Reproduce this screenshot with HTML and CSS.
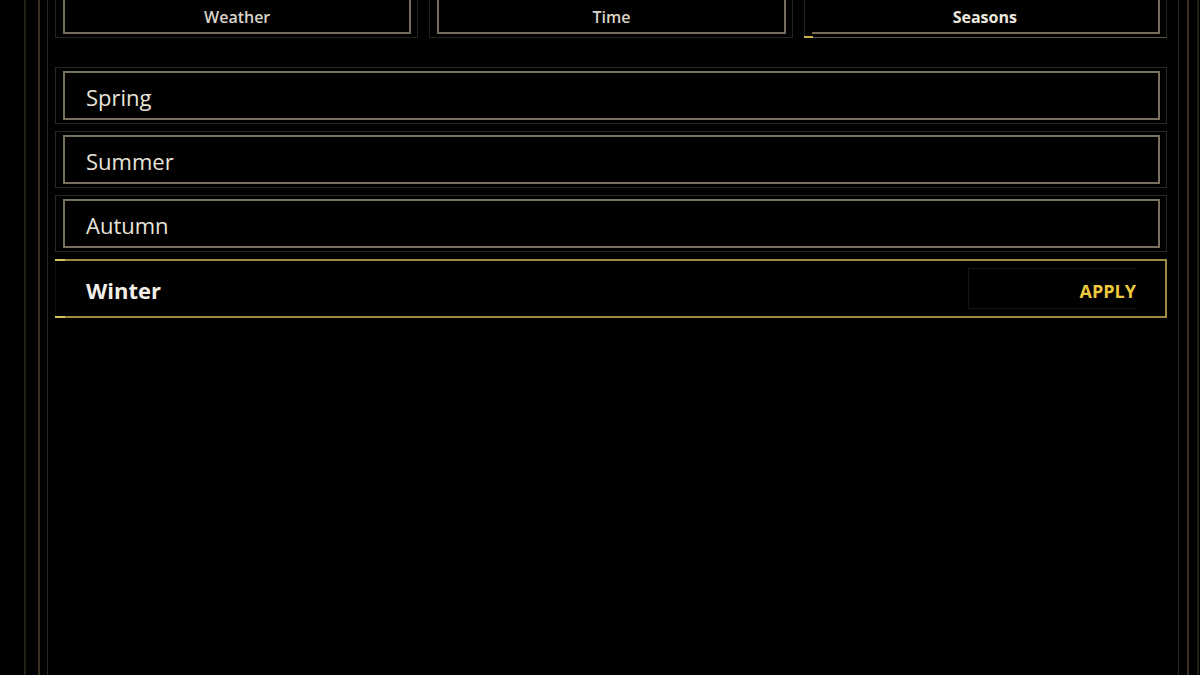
FILE: index.html
```html
<!DOCTYPE html>
<html>
<head>
<meta charset="utf-8">
<link rel="stylesheet" href="styles.css">
</head>
<body>
<div class="frame1">
  <div class="frame2">
    <div class="frame3">
      <div class="tabs">
        <div class="tab"><div class="tab-inner">Weather</div></div>
        <div class="tab"><div class="tab-inner">Time</div></div>
        <div class="tab tab-active"><div class="tab-inner">Seasons</div></div>
      </div>
      <div class="list">
        <div class="row"><div class="row-inner">Spring</div></div>
        <div class="row"><div class="row-inner">Summer</div></div>
        <div class="row"><div class="row-inner">Autumn</div></div>
        <div class="row row-active">
          <span class="row-label">Winter</span>
          <div class="apply">APPLY</div>
        </div>
      </div>
    </div>
  </div>
</div>
</body>
</html>
```

FILE: styles.css
```css
* { box-sizing: border-box; }
html, body {
  margin: 0;
  padding: 0;
  background: #000;
  height: 675px;
  overflow: hidden;
  font-family: "Open Sans", "Lato", sans-serif;
}
.frame1 {
  display: flow-root;
  margin-left: 24px;
  width: 1175px;
  height: 675px;
  border-left: 2px solid #231e15;
  border-right: 2px solid #231e15;
  padding: 0 8px 0 12px;
}
.frame2 {
  display: flow-root;
  height: 100%;
  border-left: 2px solid #3a3121;
  border-right: 2px solid #3a3121;
  padding: 0 8px 0 7px;
}
.frame3 {
  display: flow-root;
  height: 100%;
  border-left: 1px solid #2a261e;
  border-right: 1px solid #2a261e;
  padding: 0 11px 0 7px;
}
.tabs {
  margin-top: -20px;
  display: grid;
  grid-template-columns: repeat(3, 1fr);
  column-gap: 11px;
}
.tab {
  position: relative;
  height: 58px;
  border: 1px solid #26231e;
  padding: 0 6px 3px 7px;
}
.tab-inner {
  height: 100%;
  border: 2px solid #756c5c;
  display: flex;
  align-items: flex-end;
  justify-content: center;
  padding-bottom: 5px;
  line-height: 20px;
  font-size: 16px;
  color: #d9d4c8;
  font-weight: 600;
}
.tab-active {
  border-bottom-color: #5e574a;
}
.tab-active .tab-inner {
  border-left: none;
  font-weight: 700;
  color: #ece8de;
}
.tab-active::before {
  content: "";
  position: absolute;
  left: -1px;
  bottom: -1px;
  width: 9px;
  height: 2px;
  background: #c9b04a;
}
.list {
  margin-top: 29px;
  display: flex;
  flex-direction: column;
  gap: 7px;
}
.row {
  height: 57px;
  border: 1px solid #2b2823;
  padding: 3px 6px 3px 7px;
}
.row-inner {
  height: 100%;
  border: 2px solid #7a705f;
  display: flex;
  align-items: center;
  padding-left: 21px;
  padding-top: 2px;
  font-size: 22px;
  color: #e8e4da;
  font-weight: 500;
}
.row-active {
  position: relative;
  height: 59px;
  border-top: 2px solid #9e8a3e;
  border-bottom: 2px solid #9e8a3e;
  border-right: 2px solid #9e8a3e;
  border-left: 1px solid #0d0d0d;
  padding: 0 29px 0 30px;
  display: flex;
  align-items: center;
  justify-content: space-between;
}
.row-active::before,
.row-active::after {
  content: "";
  position: absolute;
  left: -1px;
  width: 10px;
  height: 2px;
  background: #d8c25c;
}
.row-active::before { top: -2px; }
.row-active::after { bottom: -2px; }
.row-label {
  font-size: 22px;
  font-weight: 700;
  color: #f2efe8;
  padding-top: 2px;
}
.apply {
  width: 168px;
  height: 41px;
  border: 1px solid #161616;
  border-right: none;
  display: flex;
  align-items: center;
  justify-content: flex-end;
  padding-top: 4px;
  font-size: 18px;
  font-weight: 700;
  color: #ecc83e;
}
```
